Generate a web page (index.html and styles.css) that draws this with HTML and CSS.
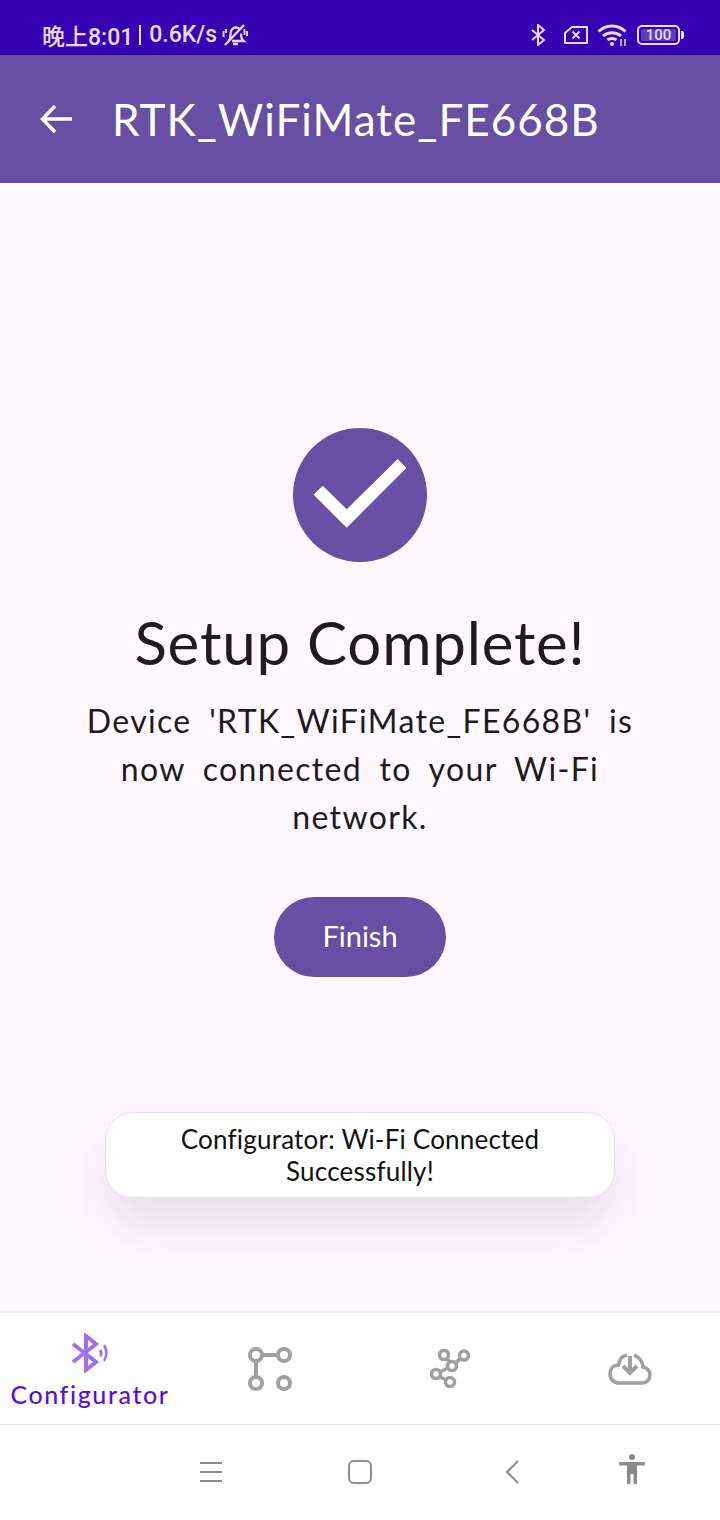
FILE: index.html
```html
<!DOCTYPE html>
<html lang="en">
<head>
    <meta charset="UTF-8">
    <meta name="viewport" content="width=device-width, initial-scale=1.0">
    <title>Configurator</title>
    <link rel="stylesheet" href="styles.css">
</head>
<body>
    <div class="phone">
        <div class="status-bar">
            <div class="status-left">
                <span>晚上8:01</span>
                <span class="status-sep"></span>
                <span>0.6K/s</span>
                <svg class="bell" width="26" height="24" viewBox="0 0 26 24" fill="none" stroke="currentColor" stroke-width="2.300">
                    <path d="M6.500 18c1.500-1.500 2-3 2-6.500 0-4 2-7 5.500-7 1.500 0 3 .5 4 2M19 10.500c0 3.500.5 6 2.500 7.500H10"/>
                    <path d="M11 21h5M3 22 22 2"/>
                    <path d="M1.500 8v6M4 6v4M22.500 6v6M25 8v5" stroke-width="1.900"/>
                </svg>
            </div>
            <div class="status-right">
                <svg width="16" height="22" viewBox="0 0 16 22" fill="none" stroke="currentColor" stroke-width="2"><path d="M2 6l12 10-6 5V1l6 5L2 16"/></svg>
                <svg class="sim" width="26" height="20" viewBox="0 0 26 20" fill="none" stroke="currentColor" stroke-width="2"><path d="M9 2h15v16H2V8z" stroke-linejoin="round"/><path d="M9.500 6.500l7 7M16.500 6.500l-7 7"/></svg>
                <svg class="wifi" width="31" height="22" viewBox="0 0 31 22" fill="none" stroke="currentColor" stroke-width="3"><path d="M1.500 7.500C9 0 21 0 28.500 7.500M6 12c5-4.500 13-4.500 18 0M10.500 16c2.500-2 6.500-2 9 0"/><circle cx="15" cy="20" r="2" fill="currentColor" stroke="none"/><path d="M24 15v7M28 15v7" stroke-width="1.500"/></svg>
                <div class="battery">
                    <div class="battery-body"><span class="battery-level">100</span></div>
                    <div class="battery-tip"></div>
                </div>
            </div>
        </div>

        <div class="app-bar">
            <svg class="back-arrow" width="34" height="30" viewBox="0 0 34 30" fill="none" stroke="currentColor" stroke-width="3.400"><path d="M33 15H4M16 2 3.500 15 16 28"/></svg>
            <h1 class="app-title">RTK_WiFiMate_FE668B</h1>
        </div>

        <main class="content">
            <div class="check-circle">
                <svg width="134" height="134" viewBox="0 0 134 134"><path fill="#fff" d="M29.700 57.700 20.700 66.700 53.700 99.700 113.300 40 104.700 31 53.700 81.300z"/></svg>
            </div>
            <h2 class="done-title">Setup Complete!</h2>
            <p class="done-text">Device 'RTK_WiFiMate_FE668B' is now connected to your Wi-Fi network.</p>
            <button class="finish-btn">Finish</button>
            <div class="toast">Configurator: Wi-Fi Connected Successfully!</div>
        </main>

        <nav class="bottom-nav">
            <div class="nav-item active">
                <svg width="38" height="40" viewBox="0 0 38 40" fill="none" stroke="#a06ff5" stroke-width="4"><path d="M2 11 25 29 15 37V3L25 11 2 29"/><path d="M29 17c1.500 2 1.500 5 0 6" stroke-width="3"/><path d="M33 12c3 5 3 11 0 16" stroke-width="2.500"/></svg>
                <span class="nav-label">Configurator</span>
            </div>
            <div class="nav-item">
                <svg width="44" height="44" viewBox="0 0 44 44" fill="none" stroke="#a0a0a0" stroke-width="4"><circle cx="8" cy="8" r="6"/><circle cx="36" cy="8" r="6"/><circle cx="8" cy="36" r="6"/><circle cx="36" cy="36" r="6"/><path d="M14 8h16M8 14v16"/></svg>
            </div>
            <div class="nav-item">
                <svg width="40" height="40" viewBox="0 0 40 40" fill="none" stroke="#a0a0a0" stroke-width="3.600"><circle cx="14" cy="6" r="4.500"/><circle cx="34" cy="6.500" r="4.500"/><circle cx="22" cy="17" r="4.500"/><circle cx="6" cy="25" r="4.500"/><circle cx="20" cy="33" r="4.500"/><path d="M17 10l3 3M30 10l-5 4M18 19l-8 4M10 28l6 3"/></svg>
            </div>
            <div class="nav-item">
                <svg width="44" height="32" viewBox="0 0 44 32" fill="none" stroke="#a0a0a0" stroke-width="3.600"><path d="M19 2C14 3 11 7 10.500 12 5 12 2 16 2 21c0 5 4 9 9 9h23c4.500 0 8-3.500 8-8 0-4-3-7-7-8-.5-6-4-10-9-12"/><path d="M22 3v15" stroke-width="4"/><path d="M15 13l7 7 7-7" stroke-width="4"/></svg>
            </div>
        </nav>

        <div class="system-nav">
            <svg class="sys-menu" width="22" height="20" viewBox="0 0 22 20" fill="none" stroke="#8c8c8c" stroke-width="2"><path d="M0 1h22M0 10h22M0 19h22"/></svg>
            <svg class="sys-home" width="24" height="24" viewBox="0 0 24 24" fill="none" stroke="#8c8c8c" stroke-width="2"><rect x="1" y="1" width="22" height="22" rx="5"/></svg>
            <svg class="sys-back" width="14" height="24" viewBox="0 0 14 24" fill="none" stroke="#8c8c8c" stroke-width="2"><path d="M13 1 2 12l11 11"/></svg>
            <svg class="sys-person" width="28" height="30" viewBox="0 0 28 30" fill="#8c8c8c"><circle cx="14" cy="3" r="3"/><path d="M1 8h26v3.500h-8V30h-3.500V20h-3v10H9V11.500H1z"/></svg>
        </div>
    </div>
</body>
</html>
```

FILE: styles.css
```css
* {
    box-sizing: border-box;
}

body {
    margin: 0;
    background: #fff;
    font-family: Lato, "Noto Sans CJK SC", sans-serif;
}

.phone {
    width: 720px;
    height: 1520px;
    display: flex;
    flex-direction: column;
    overflow: hidden;
}

.status-bar {
    height: 55px;
    flex-shrink: 0;
    background: #3700b3;
    color: #e6dcff;
    display: flex;
    justify-content: space-between;
    align-items: center;
    padding: 14px 36px 0 42px;
}

.status-left {
    display: flex;
    align-items: center;
    font-family: Roboto, "Noto Sans CJK SC", sans-serif;
    font-size: 23px;
    font-weight: 500;
    white-space: nowrap;
}

.status-sep {
    width: 2px;
    height: 20px;
    background: #e6dcff;
    margin: 0 8px 0 6px;
}

.bell {
    margin-left: 5px;
}

.status-right {
    display: flex;
    align-items: center;
}

.sim {
    margin-left: 17px;
}

.wifi {
    margin-left: 8px;
}

.battery {
    display: flex;
    align-items: center;
    margin-left: 9px;
}

.battery-body {
    width: 43px;
    height: 20px;
    border: 2px solid #e6dcff;
    border-radius: 5px;
    padding: 2px;
}

.battery-level {
    display: block;
    height: 12px;
    background: #5a3dc0;
    border-radius: 2px;
    font-family: Roboto, sans-serif;
    font-size: 15px;
    font-weight: 500;
    line-height: 12px;
    text-align: center;
}

.battery-tip {
    width: 3px;
    height: 8px;
    margin-left: 1px;
    background: #e6dcff;
    border-radius: 0 2px 2px 0;
}

.app-bar {
    height: 128px;
    flex-shrink: 0;
    background: #6750a4;
    color: #fff;
    display: flex;
    align-items: center;
    padding-left: 39px;
}

.back-arrow {
    margin-right: 39px;
}

.app-title {
    margin: 0;
    font-size: 44px;
    font-weight: 400;
    letter-spacing: 1px;
    white-space: nowrap;
}

.content {
    flex: 1;
    position: relative;
    background: #fef7ff;
    display: flex;
    flex-direction: column;
    align-items: center;
    padding: 245px 70px 0;
    color: #1d1b20;
    text-align: center;
}

.check-circle {
    width: 134px;
    height: 134px;
    border-radius: 50%;
    background: #6750a4;
}

.done-title {
    margin: 40px 0 0;
    font-size: 60px;
    font-weight: 400;
    letter-spacing: 0.800px;
    line-height: 80px;
}

.done-text {
    margin: 15px 0 0;
    font-size: 32px;
    line-height: 48px;
    letter-spacing: 1.350px;
    word-spacing: 8px;
}

.finish-btn {
    margin-top: 56px;
    width: 172px;
    height: 80px;
    border: none;
    border-radius: 40px;
    padding: 0 0 4px;
    background: #6750a4;
    color: #fff;
    font-family: inherit;
    font-size: 29px;
}

.toast {
    position: absolute;
    left: 105px;
    top: 929px;
    width: 510px;
    height: 86px;
    padding: 10px 60px 0;
    background: #fff;
    border: 1px solid #e6e1e8;
    border-radius: 28px;
    box-shadow: 0 28px 50px rgba(40, 35, 50, 0.11);
    color: #111;
    font-size: 26px;
    letter-spacing: 0.200px;
    line-height: 32px;
}

.bottom-nav {
    height: 114px;
    flex-shrink: 0;
    background: #fff;
    border-top: 2px solid #f4eff6;
    border-bottom: 1px solid #e2e2e2;
    display: grid;
    grid-template-columns: repeat(4, 180px);
}

.nav-item {
    display: flex;
    flex-direction: column;
    align-items: center;
    justify-content: center;
}

.nav-item.active {
    justify-content: flex-start;
    padding-top: 20px;
}

.nav-label {
    color: #5a10d8;
    font-size: 25px;
    font-weight: 500;
    letter-spacing: 1.600px;
    line-height: 32px;
    margin-top: 5px;
}

.system-nav {
    height: 95px;
    flex-shrink: 0;
    background: #fff;
    display: flex;
    align-items: center;
    padding: 0 0 2px 200px;
}

.sys-menu {
    margin-right: 126px;
}

.sys-home {
    margin-right: 133px;
}

.sys-back {
    margin-right: 99px;
}

.sys-person {
    margin-top: -6px;
}
```
